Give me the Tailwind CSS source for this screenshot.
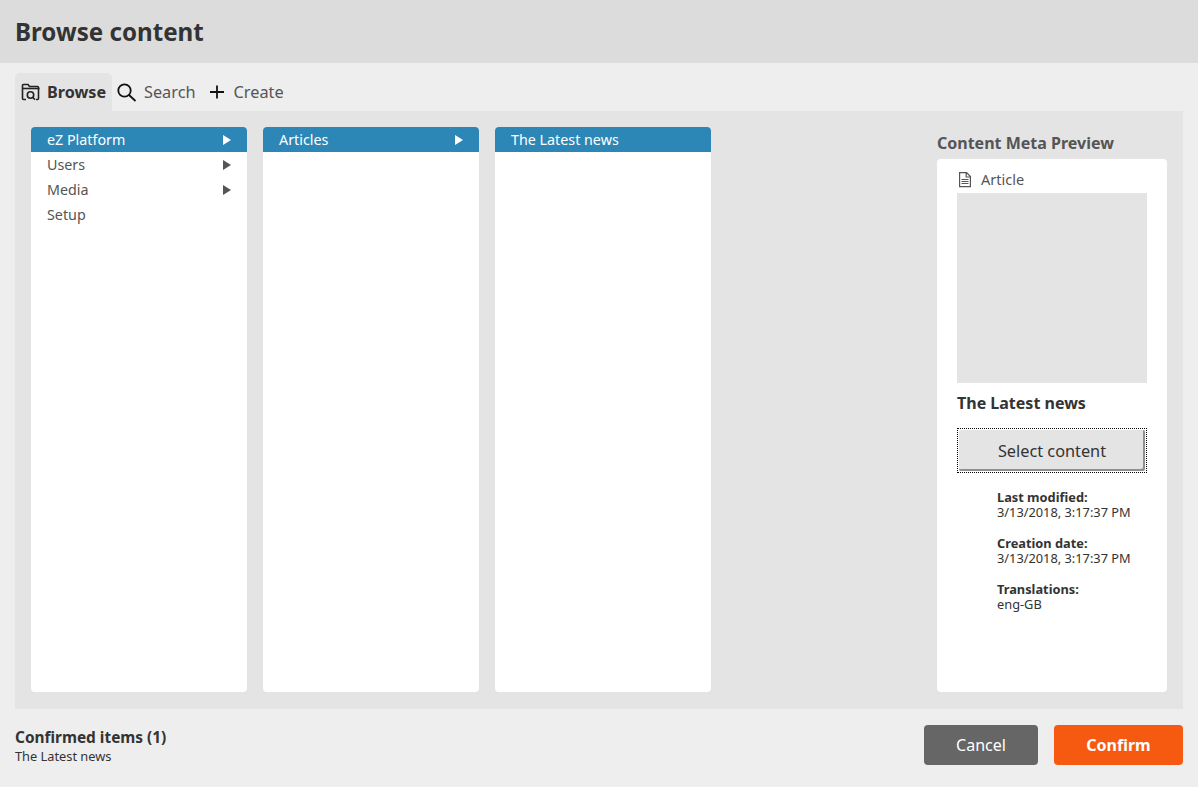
<!DOCTYPE html>
<html>
<head>
<meta charset="utf-8">
<script src="https://cdn.jsdelivr.net/npm/@tailwindcss/browser@4"></script>
</head>
<body class="bg-[#eeeeee] font-['Noto_Sans',sans-serif] text-[#333333]">
<div class="flex h-[787px] w-[1198px] flex-col overflow-hidden">
    <!-- Header -->
    <header class="flex h-[63px] items-center bg-[#dcdcdc] px-[15px] pt-[2px]">
        <h1 class="text-[24.15px] font-bold text-[#333333]">Browse content</h1>
    </header>

    <!-- Tabs -->
    <div class="flex h-[48px] items-end px-[15px] pt-[10px]">
        <div class="flex h-[38px] w-[97px] items-center gap-[6px] rounded-t-[5px] bg-[#e4e4e4] pl-[6px]">
            <svg class="h-5 w-5" viewBox="0 0 20 20" fill="none" stroke="#222" stroke-width="1.6">
                <path d="M5 17.5H2.5a1 1 0 0 1-1-1V3.5a1 1 0 0 1 1-1h4.5l1.5 2h8a1 1 0 0 1 1 1v11a1 1 0 0 1-1 1H15"/>
                <path d="M1.5 6.5h17"/>
                <circle cx="9.5" cy="13" r="3.2"/>
                <path d="M11.8 15.3l2.2 2.4"/>
            </svg>
            <span class="text-[16.2px] font-bold">Browse</span>
        </div>
        <div class="flex h-[38px] items-center gap-[7px] pl-[5px] pr-[11px] text-[#555555]">
            <svg class="h-5 w-5" viewBox="0 0 20 20" fill="none" stroke="#111" stroke-width="1.8">
                <circle cx="7.5" cy="8.5" r="6.2"/>
                <path d="M12 13l6.5 6"/>
            </svg>
            <span class="text-[16.3px]">Search</span>
        </div>
        <div class="flex h-[38px] items-center gap-[7px] text-[#555555]">
            <svg class="h-5 w-5" viewBox="0 0 20 20" fill="none" stroke="#111" stroke-width="1.8">
                <path d="M10 3.5v13M3 10h14"/>
            </svg>
            <span class="text-[16.3px]">Create</span>
        </div>
    </div>

    <!-- Finder -->
    <main class="mx-[15px] flex h-[598px] gap-4 bg-[#e4e4e4] p-4">
        <div class="h-[565px] w-[216px] overflow-hidden rounded bg-white text-[14.3px] text-[#555555]">
            <div class="flex h-[25px] items-center justify-between bg-[#2d87b6] pl-4 pr-4 text-white">eZ Platform<span class="h-0 w-0 border-y-[5px] border-l-[8px] border-y-transparent border-l-white"></span></div>
            <div class="flex h-[25px] items-center justify-between pl-4 pr-4">Users<span class="h-0 w-0 border-y-[5px] border-l-[8px] border-y-transparent border-l-[#555555]"></span></div>
            <div class="flex h-[25px] items-center justify-between pl-4 pr-4">Media<span class="h-0 w-0 border-y-[5px] border-l-[8px] border-y-transparent border-l-[#555555]"></span></div>
            <div class="flex h-[25px] items-center pl-4 pr-4">Setup</div>
        </div>
        <div class="h-[565px] w-[216px] overflow-hidden rounded bg-white text-[14.3px]">
            <div class="flex h-[25px] items-center justify-between bg-[#2d87b6] pl-4 pr-4 text-white">Articles<span class="h-0 w-0 border-y-[5px] border-l-[8px] border-y-transparent border-l-white"></span></div>
        </div>
        <div class="h-[565px] w-[216px] overflow-hidden rounded bg-white text-[14.3px]">
            <div class="flex h-[25px] items-center bg-[#2d87b6] pl-4 pr-4 text-white">The Latest news</div>
        </div>

        <!-- Meta preview -->
        <div class="ml-auto flex w-[230px] flex-col">
            <h2 class="flex h-[32px] items-center text-base font-bold text-[#555555]">Content Meta Preview</h2>
            <div class="h-[533px] rounded bg-white px-5">
                <div class="flex h-[34px] items-center gap-[8px] pt-[8px] text-[14.5px] text-[#555555]">
                    <svg class="h-4 w-4" viewBox="0 0 16 16" fill="none" stroke="#555" stroke-width="1.2">
                        <path d="M2.6 .6h7l3.8 4v10H2.6zM9.2 .6v4.4h4.2"/>
                        <path d="M4.5 7.5h7M4.5 9.5h7M4.5 11.5h7" stroke-width="1"/>
                    </svg>
                    Article
                </div>
                <div class="h-[190px] bg-[#e4e4e4]"></div>
                <h3 class="mt-[9px] text-base font-bold leading-[22px]">The Latest news</h3>
                <button class="mt-[14px] block h-[45px] w-[190px] border border-dotted border-black p-px text-[16.3px] text-[#333333]">
                    <span class="flex h-full items-center justify-center rounded-[2px] bg-[#e4e4e4] pt-[2px] shadow-[inset_-2px_-2px_0_#8f8f8f]">Select content</span>
                </button>
                <div class="mt-[17px] pl-10 text-[12.8px] leading-[15px]">
                    <div class="font-bold">Last modified:</div>
                    <div>3/13/2018, 3:17:37 PM</div>
                    <div class="mt-4 font-bold">Creation date:</div>
                    <div>3/13/2018, 3:17:37 PM</div>
                    <div class="mt-4 font-bold">Translations:</div>
                    <div>eng-GB</div>
                </div>
            </div>
        </div>
    </main>

    <!-- Footer -->
    <footer class="flex flex-1 items-start justify-between px-[15px] pt-4">
        <div class="pt-[3px]">
            <div class="text-[15.4px] font-bold leading-5">Confirmed items (1)</div>
            <div class="text-[12.8px] leading-4">The Latest news</div>
        </div>
        <div class="flex gap-4">
            <button class="h-10 w-[114px] rounded bg-[#666666] text-base text-white">Cancel</button>
            <button class="h-10 w-[129px] rounded bg-[#f65a11] text-base font-bold text-white">Confirm</button>
        </div>
    </footer>
</div>
</body>
</html>
